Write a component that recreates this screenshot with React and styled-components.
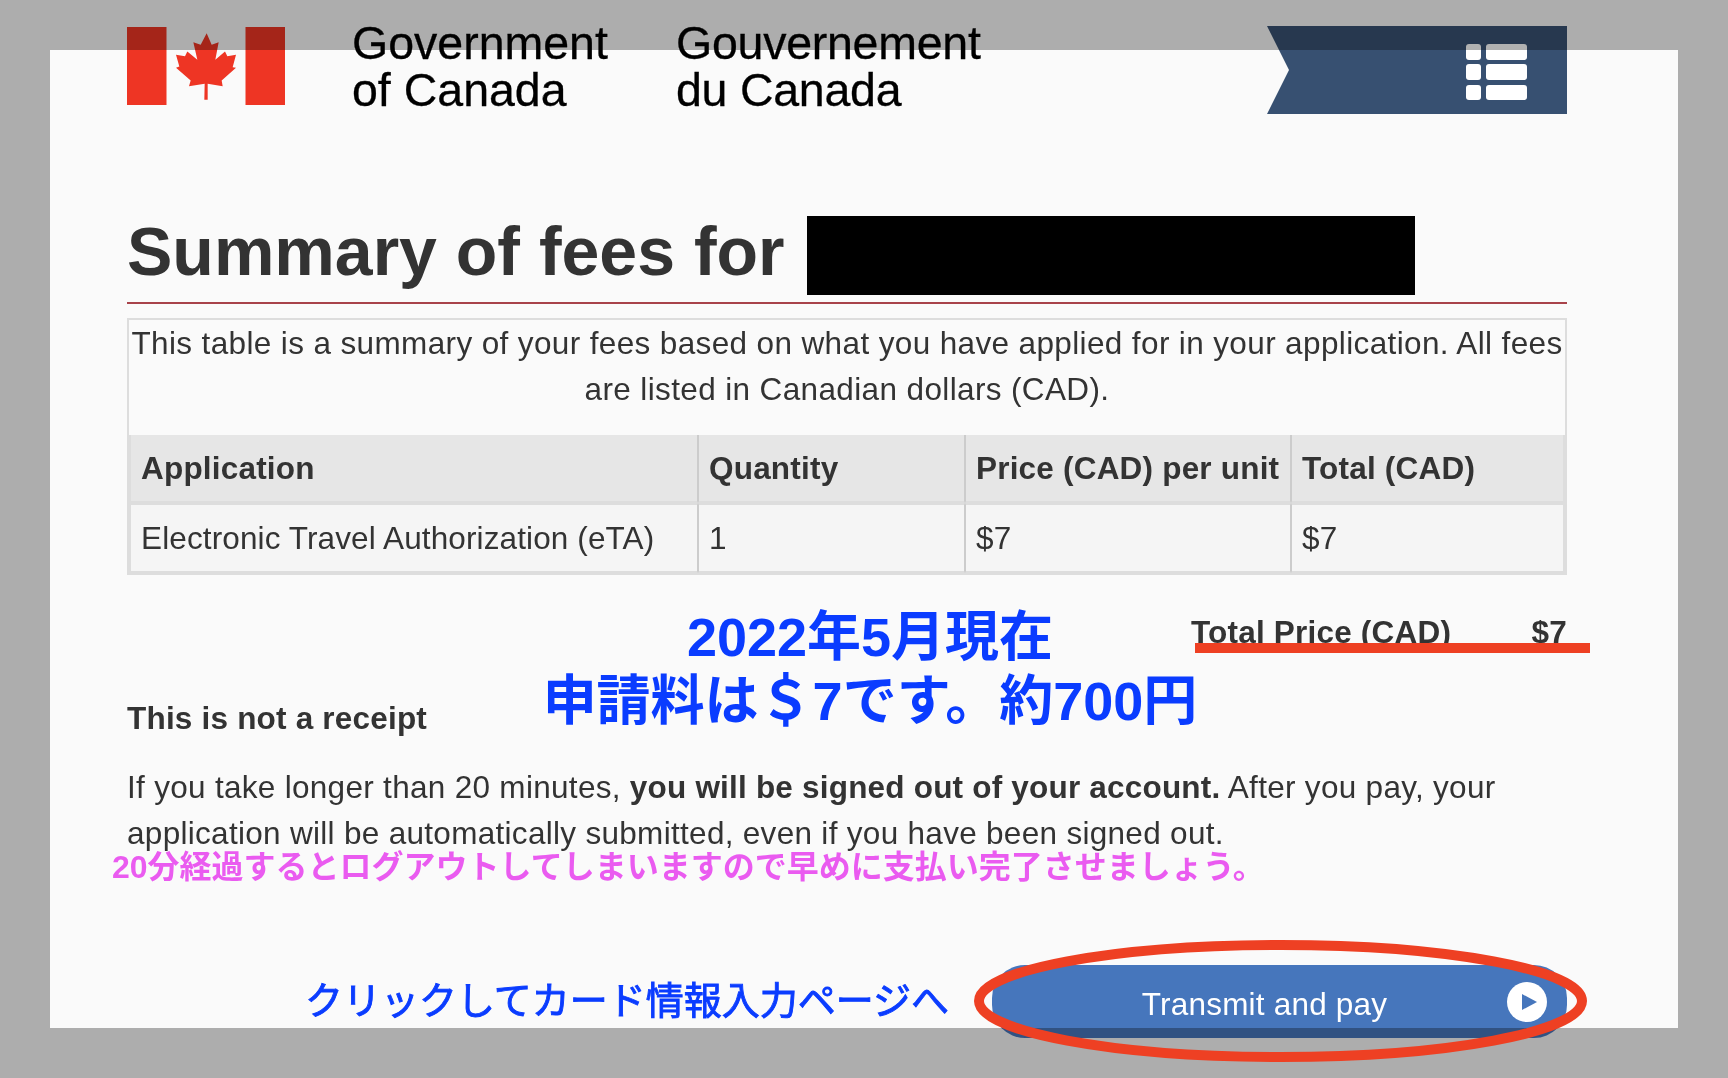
import React from "react";
import styled, { createGlobalStyle } from "styled-components";

const GlobalStyle = createGlobalStyle`
  html, body {
    margin: 0;
    padding: 0;
    overflow: hidden;
  }
`;

const Page = styled.div`
  position: relative;
  box-sizing: border-box;
  width: 1728px;
  height: 1078px;
  padding: 26px 161px 0 127px;
  overflow: hidden;
  background: #fafafa;
  color: #333;
  font-family: "Liberation Sans", "Noto Sans CJK JP", sans-serif;
  font-size: 31.5px;
  line-height: 46px;
`;

const Frame = styled.div`
  position: absolute;
  inset: 0;
  z-index: 2;
  border: 50px solid #b1b1b1;
  mix-blend-mode: multiply;
  pointer-events: none;
`;

const Header = styled.header`
  display: flex;
  align-items: flex-start;
  height: 88px;
`;

const Flag = styled.svg`
  flex: none;
  width: 158px;
  height: 78px;
  margin: 1px 67px 0 0;
`;

const GovName = styled.div`
  flex: none;
  width: ${(p) => p.$width}px;
  margin-top: -6px;
  color: #000;
  font-size: 46.5px;
  letter-spacing: ${(p) => p.$spacing || 0}px;
  line-height: 46.5px;
  -webkit-text-stroke: 0.3px #000;
`;

const Banner = styled.button`
  display: flex;
  align-items: flex-start;
  justify-content: flex-end;
  width: 300px;
  height: 88px;
  margin-left: auto;
  padding: 18px 40px 0 0;
  border: 0;
  background: #375071;
  clip-path: polygon(0 0, 100% 0, 100% 100%, 0 100%, 22px 50%);
`;

const TitleRow = styled.div`
  display: flex;
  align-items: flex-start;
  gap: 22px;
  margin-top: 102px;
  padding-bottom: 7px;
  border-bottom: 2px solid #a8434a;
`;

const Title = styled.h1`
  margin: 0;
  font-size: 68px;
  font-weight: 700;
  line-height: 71px;
`;

const Redacted = styled.div`
  width: 608px;
  height: 79px;
  background: #000;
`;

const TableBox = styled.div`
  margin-top: 14px;
  border: 2px solid #ddd;
`;

const FeeTable = styled.table`
  width: 100%;
  table-layout: fixed;
  border-collapse: separate;
  border-spacing: 0;
  caption-side: top;
`;

const Caption = styled.caption`
  padding-bottom: 23px;
  letter-spacing: 0.37px;
  text-align: center;
`;

const Head = styled.th`
  width: ${(p) => p.$width};
  box-sizing: border-box;
  height: 68px;
  padding: 1px 0 1px 10px;
  border-right: 1px solid #ccc;
  border-left: 1px solid #ccc;
  border-bottom: 2px solid #ddd;
  background: #e6e6e6;
  font-weight: 700;
  letter-spacing: 0.2px;
  text-align: left;
  white-space: nowrap;

  &:first-child {
    border-left: 2px solid #ddd;
  }
  &:last-child {
    border-right: 2px solid #ddd;
  }
`;

const Cell = styled.td`
  box-sizing: border-box;
  height: 70px;
  padding: 0 0 0 10px;
  border-right: 1px solid #ccc;
  border-left: 1px solid #ccc;
  border-top: 2px solid #ddd;
  border-bottom: 2px solid #ddd;
  background: #f5f5f5;
  letter-spacing: 0.12px;

  &:first-child {
    border-left: 2px solid #ddd;
  }
  &:last-child {
    border-right: 2px solid #ddd;
  }
`;

const TotalRow = styled.div`
  display: flex;
  justify-content: space-between;
  margin-top: 34px;
  padding-left: 1064px;
  font-weight: 700;
  letter-spacing: 0.2px;
`;

const Receipt = styled.h2`
  margin: 40px 0 0;
  font-size: inherit;
  font-weight: 700;
  letter-spacing: 0.2px;
  line-height: inherit;
`;

const Notice = styled.p`
  margin: 23px 0 0;
  letter-spacing: 0.3px;

  b {
    letter-spacing: 0.2px;
  }
`;

const Actions = styled.div`
  display: flex;
  justify-content: flex-end;
  margin-top: 109px;
`;

const PayButton = styled.button`
  position: relative;
  box-sizing: border-box;
  width: 575px;
  height: 73px;
  padding: 4px 30px 0 0;
  border: 0;
  border-radius: 33px;
  background: #4676bc;
  color: #fff;
  font: inherit;
  letter-spacing: 0.2px;
`;

const PlayIcon = styled.svg`
  position: absolute;
  top: 17px;
  right: 20px;
  width: 40px;
  height: 40px;
`;

const Annotation = styled.div`
  position: absolute;
  z-index: 3;
  font-weight: 700;
  white-space: nowrap;
`;

const FeeNote = styled(Annotation)`
  top: 605px;
  left: 536px;
  width: 668px;
  color: #0a3cff;
  font-size: 54px;
  line-height: 64px;
  text-align: center;
`;

const LogoutNote = styled(Annotation)`
  top: 847px;
  left: 112px;
  color: #ea5bf0;
  font-size: 32px;
  line-height: 40px;
`;

const ClickNote = styled(Annotation)`
  top: 977px;
  left: 305px;
  color: #0a3cff;
  font-size: 38px;
  font-weight: 400;
  line-height: 48px;
  -webkit-text-stroke: 0.9px #0a3cff;
`;

const RedUnderline = styled.div`
  position: absolute;
  z-index: 3;
  top: 643px;
  left: 1195px;
  width: 395px;
  height: 10px;
  background: #ee4023;
`;

const RedEllipse = styled.svg`
  position: absolute;
  z-index: 3;
  top: 940px;
  left: 974px;
  width: 613px;
  height: 122px;
`;

const columns = [
  { label: "Application", width: "569px", value: "Electronic Travel Authorization (eTA)" },
  { label: "Quantity", width: "267px", value: "1" },
  { label: "Price (CAD) per unit", width: "326px", value: "$7" },
  { label: "Total (CAD)", width: "274px", value: "$7" },
];

const App = () => {
  return (
    <Page>
      <GlobalStyle />
      <Header>
        <Flag viewBox="0 0 158 78">
          <rect x="0" y="0" width="39.5" height="78" fill="#ee3524" />
          <rect x="118.5" y="0" width="39.5" height="78" fill="#ee3524" />
          <svg x="49" y="6" width="60" height="67" viewBox="198 68 180 200">
            <polygon
              fill="#ee3524"
              points="290,68 305,103 326,95 316,148 345,123 352,137 378,133 368,170 378,172 335,210 338,227 293,220 293,268 283,268 284,220 237,227 242,210 198,172 208,168 198,133 225,137 232,123 262,148 250,95 272,103"
            />
          </svg>
        </Flag>
        <GovName $width={324}>
          Government
          <br />
          of Canada
        </GovName>
        <GovName $width={320} $spacing={-0.25}>
          Gouvernement
          <br />
          du Canada
        </GovName>
        <Banner aria-label="Menu">
          <svg width="61" height="56" viewBox="0 0 61 56" fill="#fff">
            <rect x="0" y="0" width="15" height="16" rx="3" />
            <rect x="20" y="0" width="41" height="16" rx="3" />
            <rect x="0" y="20" width="15" height="16" rx="3" />
            <rect x="20" y="20" width="41" height="16" rx="3" />
            <rect x="0" y="41" width="15" height="15" rx="3" />
            <rect x="20" y="41" width="41" height="15" rx="3" />
          </svg>
        </Banner>
      </Header>

      <TitleRow>
        <Title>Summary of fees for</Title>
        <Redacted />
      </TitleRow>

      <TableBox>
        <FeeTable>
          <Caption>
            This table is a summary of your fees based on what you have applied for in your application. All fees are
            listed in Canadian dollars (CAD).
          </Caption>
          <thead>
            <tr>
              {columns.map((c) => (
                <Head key={c.label} $width={c.width}>
                  {c.label}
                </Head>
              ))}
            </tr>
          </thead>
          <tbody>
            <tr>
              {columns.map((c) => (
                <Cell key={c.label}>{c.value}</Cell>
              ))}
            </tr>
          </tbody>
        </FeeTable>
      </TableBox>

      <TotalRow>
        <span>Total Price (CAD)</span>
        <span>$7</span>
      </TotalRow>

      <Receipt>This is not a receipt</Receipt>
      <Notice>
        If you take longer than 20 minutes, <b>you will be signed out of your account.</b> After you pay, your
        application will be automatically submitted, even if you have been signed out.
      </Notice>

      <Actions>
        <PayButton>
          Transmit and pay
          <PlayIcon viewBox="0 0 40 40">
            <circle cx="20" cy="20" r="20" fill="#fff" />
            <polygon points="15,12 15,28 30,20" fill="#4676bc" />
          </PlayIcon>
        </PayButton>
      </Actions>

      <Frame />

      <FeeNote>
        2022年5月現在
        <br />
        申請料は＄7です。約700円
      </FeeNote>
      <RedUnderline />
      <LogoutNote>20分経過するとログアウトしてしまいますので早めに支払い完了させましょう。</LogoutNote>
      <ClickNote>クリックしてカード情報入力ページへ</ClickNote>
      <RedEllipse viewBox="0 0 613 122">
        <ellipse cx="306.5" cy="61" rx="301.5" ry="56" fill="none" stroke="#ee4023" strokeWidth="10" />
      </RedEllipse>
    </Page>
  );
};

export default App;
